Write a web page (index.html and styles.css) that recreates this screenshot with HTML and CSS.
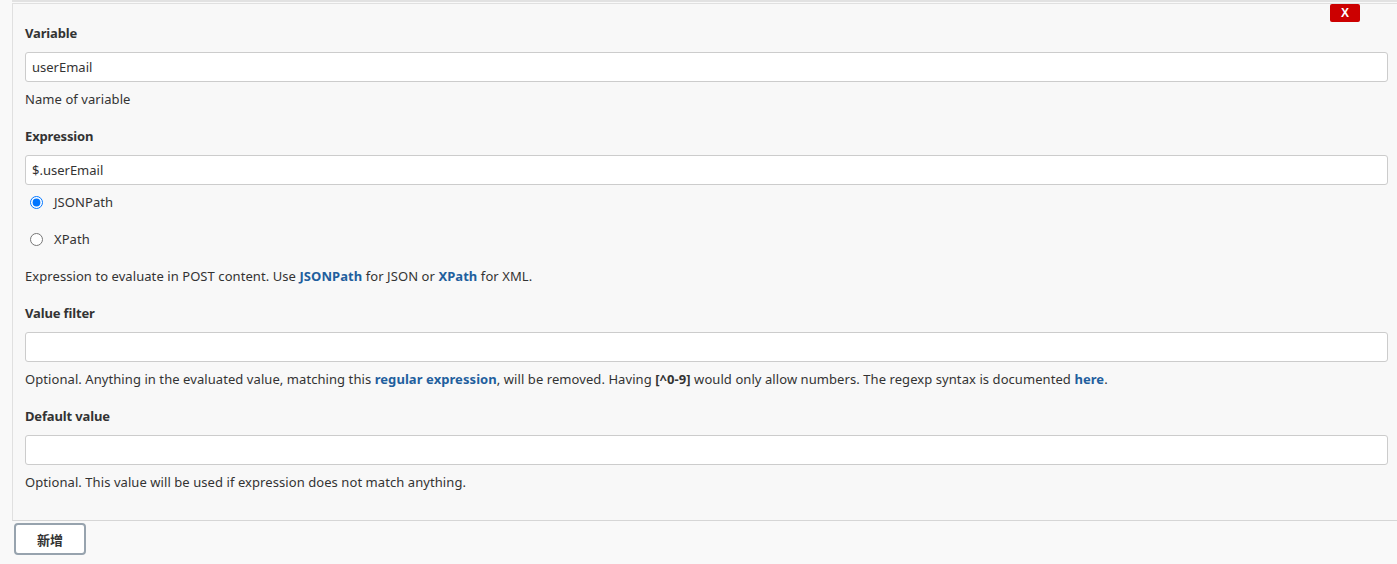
FILE: index.html
```html
<!DOCTYPE html>
<html>
<head>
<meta charset="utf-8">
<link rel="stylesheet" href="styles.css">
</head>
<body>
<div class="topline"></div>
<div class="panel">
  <button class="delete" type="button">X</button>
  <div class="field">
    <div class="label">Variable</div>
    <input class="text" type="text" value="userEmail">
    <div class="help">Name of variable</div>
  </div>
  <div class="field">
    <div class="label">Expression</div>
    <input class="text" type="text" value="$.userEmail">
    <label class="radio first"><input type="radio" name="t" checked><span>JSONPath</span></label>
    <label class="radio"><input type="radio" name="t"><span>XPath</span></label>
    <div class="help gap">Expression to evaluate in POST content. Use <a href="#">JSONPath</a> for JSON or <a href="#">XPath</a> for XML.</div>
  </div>
  <div class="field">
    <div class="label">Value filter</div>
    <input class="text" type="text" value="">
    <div class="help">Optional. Anything in the evaluated value, matching this <a href="#">regular expression</a>, will be removed. Having <b>[^0-9]</b> would only allow numbers. The regexp syntax is documented <a href="#">here</a>.</div>
  </div>
  <div class="field">
    <div class="label">Default value</div>
    <input class="text" type="text" value="">
    <div class="help">Optional. This value will be used if expression does not match anything.</div>
  </div>
</div>
<button class="add" type="button">新增</button>
</body>
</html>
```
FILE: styles.css
```css
html, body {
  margin: 0;
  padding: 0;
  background: #f9f9f9;
}
body {
  font-family: "Noto Sans", "Open Sans", "Noto Sans CJK SC", sans-serif;
  font-size: 13px;
  color: #333;
}
.topline {
  height: 2px;
  margin-left: 12px;
  background: #e2e2e2;
  margin-bottom: 1px;
}
.panel {
  position: relative;
  margin-left: 12px;
  border-top: 1px solid #e0e0e0;
  border-left: 1px solid #e0e0e0;
  border-bottom: 1px solid #d6d6d6;
  background: #f8f8f8;
  padding: 20px 9px 29px 12px;
}
.delete {
  position: absolute;
  top: 0;
  right: 37px;
  width: 30px;
  height: 18px;
  border: 0;
  border-radius: 2px;
  background: #cc0000;
  color: #fff;
  font-family: "Liberation Sans", sans-serif;
  font-weight: bold;
  font-size: 12px;
  line-height: 18px;
  padding: 0;
}
.field {
  display: flex;
  flex-direction: column;
  margin-bottom: 19px;
}
.field:last-child { margin-bottom: 0; }
.label {
  font-weight: bold;
  line-height: 18px;
  margin-bottom: 10px;
  letter-spacing: -0.15px;
}
.text {
  box-sizing: border-box;
  height: 30px;
  width: 100%;
  margin: 0;
  border: 1px solid #ccc;
  border-radius: 3px;
  background: #fff;
  padding: 0 6px;
  font-family: inherit;
  font-size: 13px;
  color: #333;
  outline: none;
}
.help {
  line-height: 18px;
  margin-top: 8px;
  letter-spacing: 0.07px;
}
.help.gap { margin-top: 19px; }
.help a {
  color: #1f5f9e;
  font-weight: bold;
  text-decoration: none;
}
.help b { font-weight: bold; }
.radio {
  display: flex;
  align-items: center;
  height: 18px;
  margin-top: 19px;
  padding-left: 4px;
  letter-spacing: 0.07px;
}
.radio.first { margin-top: 8px; }
.radio input {
  margin: 0 11px 0 1px;
  width: 13px;
  height: 13px;
}
.add {
  display: block;
  margin: 2px 0 0 14px;
  width: 72px;
  height: 32px;
  box-sizing: border-box;
  border: 2px solid #97a3ae;
  border-radius: 4px;
  background: #fff;
  font-family: "Noto Sans CJK SC", sans-serif;
  font-weight: bold;
  font-size: 13px;
  color: #333;
}
```
